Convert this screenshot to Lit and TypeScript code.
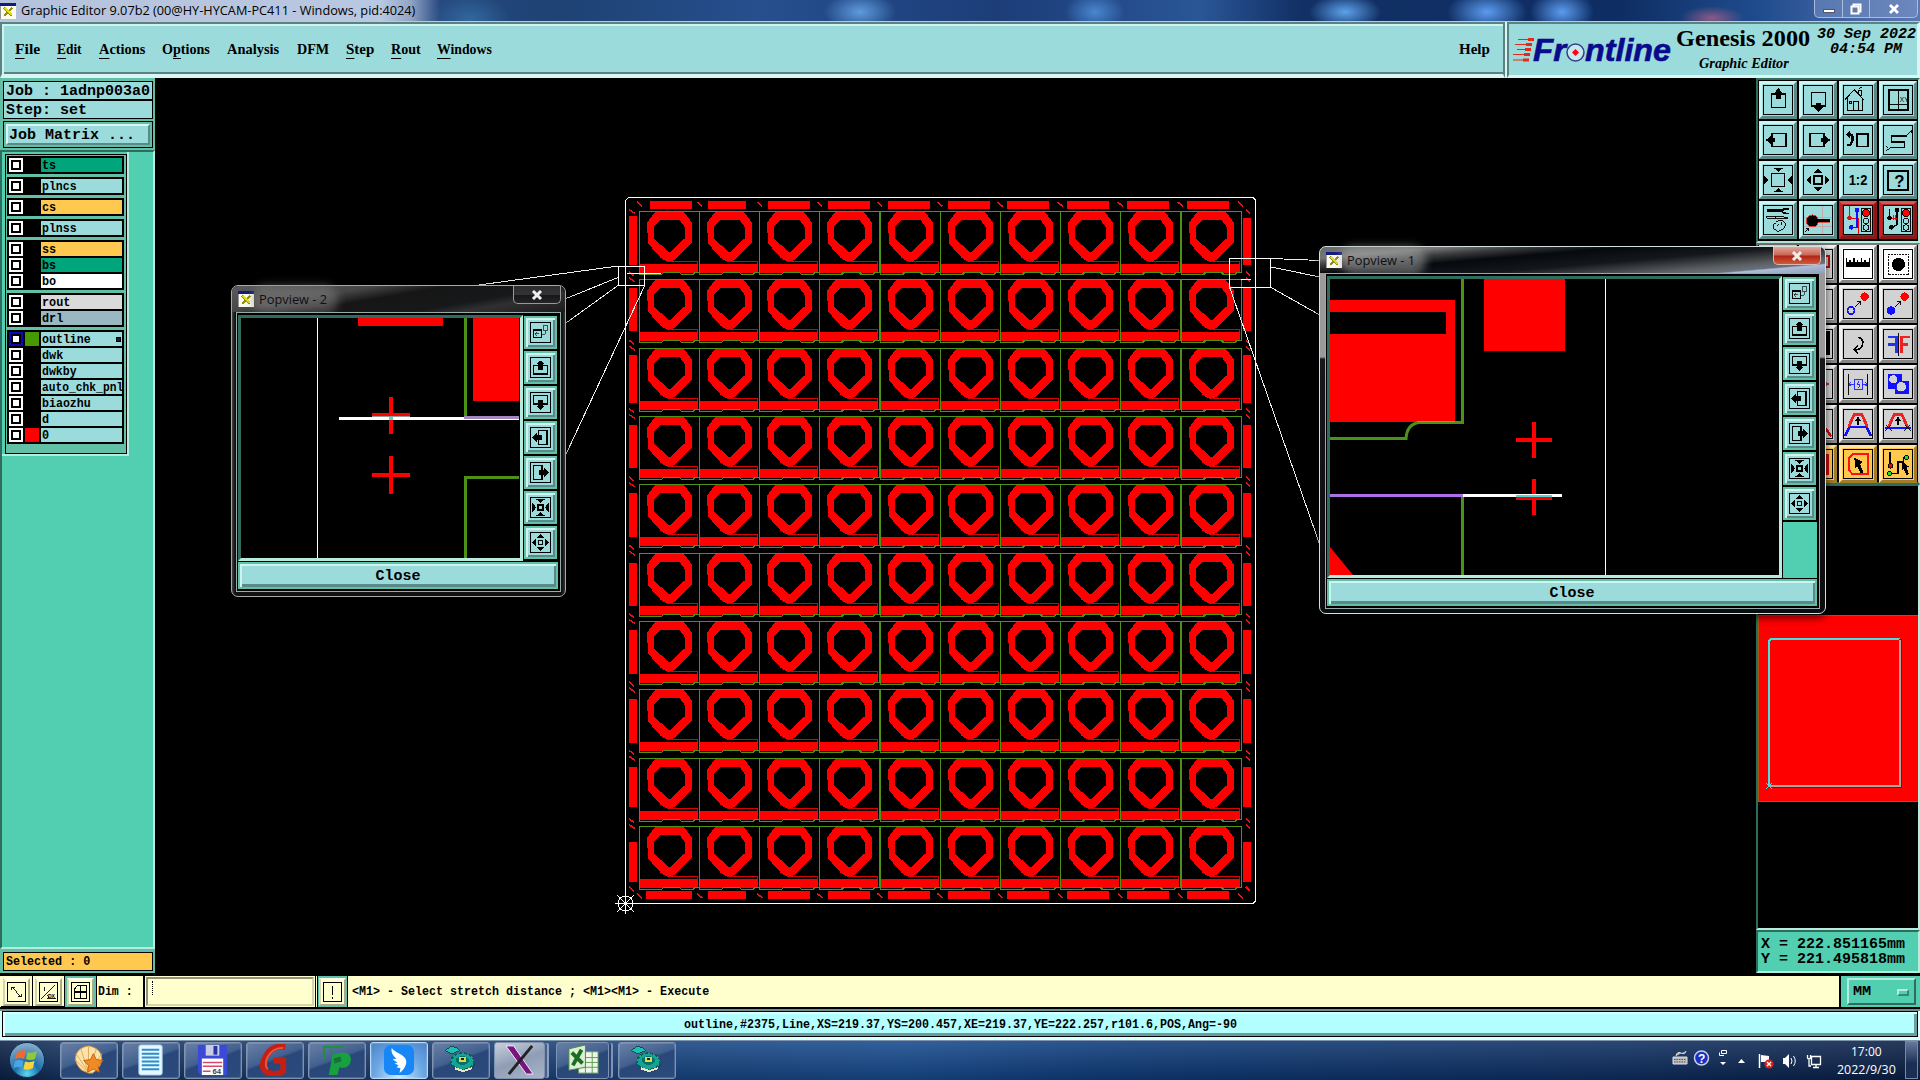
import { LitElement, html, svg, css } from "lit";
import { customElement, property } from "lit/decorators.js";

/* Text squeezed or stretched horizontally to an exact width. */
@customElement("fit-text")
class FitText extends LitElement {
  @property({ type: Number }) w = 0;
  static styles = css`
    :host { display: inline-block; white-space: pre; flex: none; }
    .box { display: block; overflow: visible; }
    .t { display: inline-block; transform-origin: 0 50%; }
  `;
  firstUpdated() {
    const t = this.renderRoot.querySelector(".t") as HTMLElement;
    const m = t.offsetWidth;
    if (m && this.w) t.style.transform = `scaleX(${this.w / m})`;
  }
  render() {
    return html`<span class="box" style="width:${this.w}px"><span class="t"><slot></slot></span></span>`;
  }
}

const K = "#000";
const tri = (p: string, c = K) => svg`<polygon points=${p} fill=${c} />`;
const box = (x: number, y: number, w: number, h: number, s = 2, c = K, f = "none") =>
  svg`<rect x=${x} y=${y} width=${w} height=${h} fill=${f} stroke=${c} stroke-width=${s} />`;
const ln = (d: string, s = 1, c = K) => svg`<path d=${d} fill="none" stroke=${c} stroke-width=${s} />`;
const dot = (x: number, y: number, r: number, c = K, st = "none") =>
  svg`<circle cx=${x} cy=${y} r=${r} fill=${c} stroke=${st} />`;

const icons: Record<string, unknown> = {
  up: svg`${box(8, 9, 15, 14)}${tri("15.5,2 20,8 18,8 18,14 13,14 13,8 11,8")}`,
  down: svg`${box(8, 7, 15, 14)}${tri("13,18 18,18 18,23 20,23 15.5,28 11,23 13,23")}`,
  left: svg`${box(9, 8, 15, 14)}${tri("2,15 8,10 8,12.5 12,12.5 12,17.5 8,17.5 8,20")}`,
  right: svg`${box(6, 8, 15, 14)}${tri("28,15 22,10 22,12.5 18,12.5 18,17.5 22,17.5 22,20")}`,
  home: svg`${ln("M1,14.500L11,4L21,14.500M3.500,12.500V26.500H19.500V12.500M10.500,26.500V16.500H15.500V26.500M5.500,16.500h2.500v2.500h-2.500ZM15.500,8V4.500H18.500V11M16,3l3,-2", 1.2)}`,
  win: svg`${box(5, 4, 21, 22)}${ln("M15.500,4V26M5,19.500H26")}<text x="17" y="17" font-size="7" font-family="Liberation Sans">XY</text>`,
  undo: svg`${ln("M4,9H7Q10,10 9,16L7,20H3", 2.5)}${tri("2,9 6,5 6,13")}${box(14, 9, 12, 13)}`,
  snake: svg`${ln("M25,11H8V17H22V23H7", 2)}${ln("M24,10l5,-5M29,4v3M7,23l-5,4M2,21l3,3")}`,
  zin: svg`${box(8, 8, 14, 14)}${tri("10,2 21,2 15.500,6")}${tri("10,28 21,28 15.500,24")}${tri("0,10 5,15 0,20")}${tri("30,10 25,15 30,20")}`,
  zout: svg`${box(11, 11, 8, 8)}${tri("10,8 15,3 20,8")}${tri("10,22 15,27 20,22")}${tri("8,10 3,15 8,20")}${tri("22,10 27,15 22,20")}`,
  ratio: svg`<text x="5" y="20" font-size="15" font-weight="bold" font-family="Liberation Sans" textLength="20" lengthAdjust="spacingAndGlyphs">1:2</text>`,
  help: svg`${box(4, 5, 22, 21)}<text x="11" y="22" font-size="18" font-family="Liberation Sans" font-weight="bold">?</text>`,
  tools: svg`${ln("M3,5H19", 3)}${ln("M27,3H22Q19,4 20,7L23,8H27", 2)}${ln("M3,11H12V13H3ZM12,11.500H20L26,13H12")}${ln("M15,16Q10,17 10,23Q12,29 18,26Q24,23 23,18Q20,14 15,16M14,21l2,-2M19,17v3")}`,
  ball: svg`${ln("M19.500,0V30M0,12.500H30M0,21.500H30", 1, "#c9a9a9")}${ln("M9,16H28", 5, "#d54")}${dot(9, 16, 6.500, "#000", "#e33")}${ln("M9,15.500H28", 3)}${ln("M1,28L5,24M2,24H5V27")}`,
  lights: svg`${ln("M6,0V12M6,13H16V30", 1.2, "#f00")}${ln("M14,5V20M8,23H14V8", 1.5, "#11f")}${dot(6, 13, 2.500, "#d11")}${dot(14, 4, 2.500, "#11f")}${dot(8, 23, 2.500, "#11f")}${box(18.500, 2.500, 10, 25, 1)}${dot(23.500, 7.500, 4, "#f00", K)}${dot(23.500, 16, 3, "none", K)}${dot(23.500, 23, 3, "none", K)}`,
  lights2: svg`${ln("M6,3V13M14,4V20L8,23", 1.500)}${ln("M7,13H14M10,10V15M12.500,10V15", 1, "#f00")}${dot(6, 13, 2.500)}${dot(14, 4, 2.500)}${dot(8, 23, 2.500)}${box(18.500, 2.500, 10, 25, 1)}${dot(23.500, 7.500, 4, "#f00", K)}${dot(23.500, 16, 3, "none", K)}${dot(23.500, 23, 3, "none", K)}`,
  ruler: svg`${ln("M2,15.500H28", 5)}${ln("M2.500,9V14M6.500,11V14M10.500,9V14M14.500,11V14M18.500,9V14M22.500,11V14M27.500,9V14", 1.500)}`,
  dashdot: svg`<rect x="4.500" y="4.500" width="22" height="22" fill="none" stroke="#000" stroke-dasharray="2 1" />${dot(15.500, 15.500, 7)}`,
  mv1: svg`${dot(22, 7, 4.500, "#f00")}<circle cx="7.500" cy="22" r="3.800" fill="none" stroke="#11f" stroke-width="2" />${ln("M12,18L18,12M14,12.500H18V16")}`,
  mv2: svg`${dot(22, 7, 4.500, "#f00")}${dot(7.500, 22, 4.500, "#11f")}${ln("M12,18L18,12M14,12.500H18V16")}`,
  rot: svg`${ln("M15,8Q21,9 20,15Q18,22 12,21", 1.8)}${ln("M15,17L11,21L15,25", 1.5)}`,
  mirror: svg`${ln("M4,7.500H13V25M4,15.500H13", 3, "#2233ee")}${ln("M28,7.500H19V25M26,15.500H19", 3, "#e22")}${ln("M15.500,3V28")}`,
  stretch: svg`${ln("M4.500,4V27M25.500,4V27")}${ln("M5,15.500H11M19,15.500H25M8,13L5,15.500L8,18M22,13L25,15.500L22,18", 1, "#22f")}${box(11.500, 10.500, 8, 10, 1, "#22f")}${ln("M16,12L14,16H17L16,19", 1, "#22f")}`,
  shapes: svg`<rect x="4" y="4" width="15" height="16" fill="#11f" /><rect x="12" y="12" width="15" height="14" fill="#11f" />${dot(10, 10, 4.500, "#d2d2d2")}${dot(18.500, 18, 5.500, "#d2d2d2", "#11f")}`,
  trap: svg`${ln("M1,28L6,18H24L29,28", 2.500, "#11f")}${ln("M5,18L11,4.500H19L25,18", 3, "#e22")}${ln("M15,16V9M12,12L15,8.500L18,12", 1.5)}`,
  trap2: svg`${ln("M1,19H29", 2.500, "#11f")}${ln("M5,18L11,4.500H19L25,18", 3, "#e22")}${ln("M15,16V9M12,12L15,8.500L18,12", 1.500)}${ln("M2,22L8,16M2,16L8,22M22,22L28,16M22,16L28,22")}`,
  sel: svg`<path d="M10,4H26V26H9L5,21V9Z" fill="none" stroke="#f11" stroke-width="2" />${tri("11,8 20,13 17,15 21,24 18,25 14,17 12,20")}`,
  sel2: svg`${ln("M6.500,2V18", 1.5)}${ln("M8,25H15V13H21V8H24", 1.500)}${dot(7, 17, 2.500, "#c11", K)}${dot(6, 25, 2.500, "#2d2", K)}${dot(24, 8, 2.500, "#2d2", K)}${tri("19,12 27,18 24,19 27,26 24,27 21,20 19,22")}`,
  frag1: svg`${box(13, 6, 14, 12, 2, "#b11")}`,
  frag2: svg``,
  frag3: svg`<rect x="4" y="1" width="24" height="26" fill="#000" />`,
  frag4: svg`${tri("21,11 28,15 21,19", "#a44")}`,
  frag5: svg`${ln("M22,18L29,28", 2.500, "#c11")}`,
  frag6: svg`<rect x="6" y="4" width="21" height="23" fill="#c11" />`,
  pback: svg`${box(4, 11, 12, 12, 2)}${box(19.500, 3.500, 7, 9, 1)}${ln("M16,17.500H22.500V12M7,17H13M9,14L6.500,17L9,20")}`,
  pup: svg`${box(4, 12, 22, 13, 2.5)}${tri("15,4 22,10 19,10 19,19 11,19 11,10 8,10")}`,
  pdown: svg`${box(4, 4, 22, 13, 2.5)}${tri("11,11 19,11 19,20 22,20 15,27 8,20 11,20")}`,
  pleft: svg`${box(12, 4, 13, 22, 2.5)}${tri("2,15 9,8 9,11 17,11 17,19 9,19 9,22")}`,
  pright: svg`${box(4, 4, 13, 22, 2.5)}${tri("28,15 21,8 21,11 13,11 13,19 21,19 21,22")}`,
  pin: svg`${box(11.500, 11.500, 7, 7, 2.5)}${tri("7,1 23,1 15,8")}${tri("7,29 23,29 15,22")}${tri("1,6 8,15 1,24")}${tri("29,6 22,15 29,24")}`,
  pout: svg`${box(11.500, 11.500, 7, 7, 1.5)}${tri("9,8 15,2 21,8")}${tri("9,22 15,28 21,22")}${tri("8,9 2,15 8,21")}${tri("22,9 28,15 22,21")}`,
  diag: svg`${ln("M7,7L23,23M7,12V7H12M18,23H23V18", 1.5)}`,
  angle: svg`${ln("M2,26L26,4M8,6V13M13,20Q15,22 14,26M14,26H28", 1.500)}<text x="14" y="25" font-size="9" font-family="Liberation Sans">DX</text>`,
  grid: svg`${ln("M5,9L10,4H25V26H5ZM15,4V26M5,15H25", 2)}`,
  bang: svg`${ln("M15,5V20M15,23V26", 2)}`,
};

@customElement("tool-button")
class ToolButton extends LitElement {
  @property() icon = "";
  @property({ reflect: true }) tone = "teal";
  @property({ reflect: true }) size = "big";
  static styles = css`
    :host { display: block; box-sizing: border-box; }
    .b { box-sizing: border-box; width: 38px; height: 38px; border: 3px solid; padding: 1px;
      border-color: #cdf4f1 #598989 #598989 #cdf4f1; background: #9cdbdb; }
    svg { box-sizing: border-box; display: block; width: 30px; height: 30px; border: 1px solid #000; shape-rendering: crispEdges; overflow: hidden; }
    :host([tone="gray"]) .b { background: #d2d2d2; border-color: #f0f0f0 #858585 #858585 #f0f0f0; }
    :host([tone="white"]) .b { background: #fff; border-color: #f0f0f0 #858585 #858585 #f0f0f0; }
    :host([tone="red"]) .b { border-color: #d05a5a #8d1616 #8d1616 #c32525; box-shadow: inset 0 0 0 2px #b51d1d; }
    :host([tone="gold"]) .b { background: #ffc84f; border-color: #ffe4a5 #a47d24 #a47d24 #ffe4a5; }
    :host([size="pop"]) .b { width: 33px; height: 33px; border: 2px solid #62c0a7;
      box-shadow: inset 2px 2px #cdf4f1, inset -2px -2px #598989; padding: 4px; }
    :host([size="pop"]) svg { width: 21px; height: 21px; }
    :host([size="cmd"]) .b { width: 27px; height: 28px; background: #ffffce; padding: 2px 3px;
      border: 2px solid; border-color: #fffff0 #aaa98a #aaa98a #d5d4b0; }
    :host([size="cmd"]) svg { width: 19px; height: 20px; margin-left: -1px; }
  `;
  render() {
    return html`<div class="b"><svg viewBox="0 0 30 30" preserveAspectRatio="none">${icons[this.icon]}</svg></div>`;
  }
}

const xIcon = html`<svg width="16" height="16" viewBox="0 0 16 16" shape-rendering="crispEdges">
  <rect width="16" height="16" fill="#fbfbf0" stroke="#999" /><rect width="16" height="3" fill="#111a80" />
  <path d="M4,5L12,13M12,5L4,13" stroke="#8f8f14" stroke-width="2" /><path d="M5,5L12,12" stroke="#e4da20" stroke-width="1.500" />
</svg>`;

@customElement("pop-view")
class PopView extends LitElement {
  @property() label = "";
  @property({ type: Boolean, reflect: true }) active = false;
  static styles = css`
    :host { display: flex; flex-direction: column; box-sizing: border-box; border: 1px solid #a9a9a9; border-radius: 7px;
      background: linear-gradient(90deg, #444 0, #111 3px, #111 calc(100% - 3px), #333 100%);
      padding: 0 4px 4px; box-shadow: 0 3px 9px rgba(0,0,0,.7); }
    :host([active]) { padding: 0 5px 4px; border-color: #d5dfdf;
      background: linear-gradient(180deg, #9a9a9a 0, #999 110px, #16181c 112px, #0a0c10 100%); }
    .bar { height: 26px; margin: 0 -4px; padding: 0 0 0 6px; display: flex; align-items: center; border-radius: 6px 6px 0 0;
      background: linear-gradient(170deg, #5b5b5b 0, #464646 30%, #161616 45%, #17181a 68%, #303030 78%, #1c1c1e 100%); }
    :host([active]) .bar { margin: 0 -5px;
      background: linear-gradient(175deg, #6b6b6b 0, #777 16%, #3a3b3d 26%, #06090d 38%, #14171b 58%, #5c5f62 78%, #69717c 86%, #aebdd8 88%, #8ea0bd 100%); }
    .title { font: 13px "Open Sans", "Noto Sans", sans-serif; color: #101010; margin-left: 5px; padding: 0 4px 0 0; line-height: 15px;
      background: rgba(170,170,170,.5); box-shadow: 0 0 9px 7px rgba(170,170,170,.5); border-radius: 8px; }
    :host(:not([active])) .title { background: rgba(130,130,130,.5); box-shadow: 0 0 9px 7px rgba(130,130,130,.5); }
    .x { margin: 0 4px 0 auto; align-self: flex-start; width: 46px; height: 17px; border: 1px solid #999; border-top: 0; border-radius: 0 0 5px 5px;
      background: linear-gradient(#2c2c30 0, #333 50%, #16171a 52%, #242424); display: flex; align-items: center; justify-content: center; }
    :host([active]) .x { background: linear-gradient(#e0a79c 0, #cc6453 48%, #b02312 52%, #d05a3d); border-color: #d8b7b0; }
    .frame { flex: 1; min-height: 0; border: 1px solid #9aa; background: #000; display: flex; flex-direction: column; padding: 2px 2px 2px 1px; box-sizing: border-box; gap: 1px; }
    .main { flex: 1; display: flex; gap: 1px; min-height: 0; }
    .view { flex: 1; border: 3px solid; border-color: #2f6c5e #b5ecdd #b5ecdd #2f6c5e; overflow: hidden; }
    .side { width: 34px; display: flex; flex-direction: column; gap: 2px; padding-top: 1px; }
    .fill { flex: 1; background: #52cfb0; }
    .close { height: 27px; box-sizing: border-box; border: 2px solid #62c0a7; background: #9cdbdb; display: flex; align-items: center; justify-content: center; padding-top: 2px;
      box-shadow: inset 2px 2px #cdf4f1, inset -2px -3px #598989; font: bold 15px "Liberation Mono", monospace; color: #000; }
  `;
  render() {
    const list = ["pback", "pup", "pdown", "pleft", "pright", "pin", "pout"];
    return html`<div class="bar">${xIcon}<span class="title"><fit-text w="68">${this.label}</fit-text></span>
      <div class="x"><svg width="12" height="10" viewBox="0 0 12 10"><path d="M2,1L10,9M10,1L2,9" stroke="#eee" stroke-width="3" /></svg></div></div>
      <div class="frame"><div class="main"><div class="view"><slot></slot></div>
      <div class="side">${list.map((i) => html`<tool-button size="pop" icon=${i}></tool-button>`)}<div class="fill"></div></div></div>
      <div class="close">Close</div></div>`;
  }
}

const PX = 60.2, PY = 68.35, X0 = 639.5, Y0 = 211.5;
const R = "#f00", G = "#4c9217";

const cell = (c: number, r: number) => {
  const x = Math.round(X0 + c * PX - 0.8) + 0.5, y = Math.round(Y0 + r * PY - 0.5) + 0.5;
  return svg`<g transform="translate(${x} ${y})">
    <path fill=${R} fill-rule="evenodd" d="M16,0H44L52.500,11V31L38,46L33,49.500H26L21,46L8.500,32L7.500,11ZM21,8.500L14.500,15.500V27L29,40.500H31L45,27V15L40,8.500Z" />
    <rect x="0.500" y="52.500" width="57.500" height="8.500" fill=${R} />
    <path d="M27,49.500H58V52" fill="none" stroke="#d00" />
    <path d="M0,0H60V61H55L54,63H42L40,61H24L22,63H0Z" fill="none" stroke=${G} stroke-width=${c > 2 ? 1.5 : 1} />
  </g>`;
};

const range = (n: number) => Array.from({ length: n }, (_, i) => i);
const sideBars: [number, number][] = [[216, 265], [288, 331], [355, 403], [425, 468], [493, 537], [563, 606], [630, 674], [699, 743], [767, 807], [842, 882]];
const edgeBar = (i: number) => (i === 1 ? 38 : 42);

const board = () => svg`
  ${range(10).map((r) => range(10).map((c) => cell(c, r)))}
  ${range(10).map((i) => {
    const x = Math.round(650 + i * 59.9 - (i === 1 ? 2 : 0) - (i > 1 ? 2 : 0));
    return svg`<rect x=${x} y="201" width=${edgeBar(i)} height="8" fill=${R} />
      <rect x=${i ? x : x - 4} y="891" width=${i ? edgeBar(i) : 46} height="8" fill=${R} />`;
  })}
  ${range(11).map((i) => ln(`M${637 + i * 60.1},202l5,4.500M${637 + i * 60.1},893.500l5,4.500`, 1.5, "#e11"))}
  ${sideBars.map(([a, b], i) => svg`<rect x="629" y=${a} width="8" height=${b - a} fill=${R} /><rect x="1243" y=${i ? a : a + 2} width="8" height=${b - a - (i ? 0 : 2)} fill=${R} />`)}
  ${range(11).map((i) => {
    const y = 204.500 + i * PY;
    return ln(`${i ? `M629,${y - 1}l5,4` : ""}${i < 10 ? `M629,${y + 5}l6,4` : ""}${i ? `M1246,${y - 1}l4,4` : ""}${i < 10 ? `M1246,${y + 5}l4,4` : ""}`, 1.5, "#e11");
  })}
  <path d="M628.500,197.500H1253L1255.500,200V901L1253,903.500H625.500V200.500Z" fill="none" stroke="#fff" />
  <path d="M627,273.500H661M1241,279.500H1251" stroke="#fff" /><path d="M1182,279.500H1241" stroke="#a35ae0" />
  <path d="M618.500,266.500H644.500V285.500H618.500ZM1229.500,258.500H1270.500V287.500H1229.500Z" fill="none" stroke="#fff" />
  <path d="M618,266L241,317.500M618,277.500L518,318M618,285.500L241,557M644.500,286L518,557M1271,258.500L1779,279M1271,267L1330,279M1271,287.500L1779,574M1229.500,287L1330,574" stroke="#eee" />
  <g stroke="#fff" fill="none"><circle cx="625.500" cy="903.500" r="7.500" /><path d="M615,903.500H636M625.500,893V914M617,895L634,912M634,895L617,912" /></g>`;

type Row = [string, string, string?];
const layers: Row[][] = [
  [["ts", "#00a57b"]], [["plncs", "#9cdbdb"]], [["cs", "#ffc84f"]], [["plnss", "#9cdbdb"]],
  [["ss", "#ffc84f"], ["bs", "#00a57b"], ["bo", "#fff"]],
  [["rout", "#dadada"], ["drl", "#9ab8c2"]],
  [["outline", "#9cdbdb", "#449a00"], ["dwk", "#9cdbdb"], ["dwkby", "#9cdbdb"], ["auto_chk_pnl", "#9cdbdb"], ["biaozhu", "#9cdbdb"], ["d", "#9cdbdb"], ["0", "#9cdbdb", "#f00"]],
];

const menus: [string, string, string, number, number][] = [
  ["", "F", "ile", 25, 17], ["", "E", "dit", 25, 17], ["", "A", "ctions", 46, 17], ["O", "p", "tions", 48, 17],
  ["Anal", "", "ysis", 52, 18], ["DFM", "", "", 32, 17], ["", "S", "tep", 28, 17], ["", "R", "out", 30, 16], ["", "W", "indows", 55, 0],
];

const tools1 = ["up", "down", "home", "win", "left", "right", "undo", "snake", "zin", "zout", "ratio", "help", "tools", "ball", "lights", "lights2"];
const tools2: [string, string][] = [
  ["frag2", "gray"], ["frag1", "gray"], ["ruler", "white"], ["dashdot", "white"],
  ["frag2", "gray"], ["frag2", "gray"], ["mv1", "gray"], ["mv2", "gray"],
  ["frag2", "gray"], ["frag3", "gray"], ["rot", "gray"], ["mirror", "gray"],
  ["frag2", "gray"], ["frag4", "gray"], ["stretch", "gray"], ["shapes", "gray"],
  ["frag2", "gray"], ["frag5", "gray"], ["trap", "gray"], ["trap2", "gray"],
  ["frag6", "gold"], ["frag6", "gold"], ["sel", "gold"], ["sel2", "gold"],
];

const disc = svg`<g shape-rendering="crispEdges"><ellipse cx="19" cy="20" rx="12" ry="9" fill="#3b3560" /><ellipse cx="18" cy="18" rx="12" ry="8.500" fill="#12a596" stroke="#0b5e58" stroke-dasharray="3 2" stroke-width="2" />
  <ellipse cx="18" cy="17" rx="7" ry="4.500" fill="#0b6f66" /><ellipse cx="18" cy="16" rx="4" ry="3" fill="#d9d94a" /><ellipse cx="18" cy="15.500" rx="2" ry="1.500" fill="#124" />
  <path d="M0,7L7,2L12,4L15,7L7,10Z" fill="#1fc0b4" stroke="#0a4a48" /><path d="M10,25l9,3l9,-3" stroke="#e6e6c8" fill="none" stroke-width="2" /></g>`;
const apps: [unknown, string, number, number][] = [
  [svg`<path d="M16,30L9,27C-2,17 2,4 16,2C30,4 34,17 24,27L20,30Z" fill="#fbe3ae" stroke="#d79a3c" /><path d="M16,29V3M16,29L8,5M16,29L3,10M16,29L24,5M16,29L30,10M14,28L2,16" stroke="#e6a84c" fill="none" /><path d="M21,10l3,6l7,1l-5,5l1,7l-6,-3l-6,3l1,-7l-5,-5l7,-1Z" fill="#f08a24" stroke="#c5601a" />`, "", 58, 4],
  [svg`<rect x="4" y="1" width="24" height="31" rx="2" fill="#e9f7ff" stroke="#9fd0ee" /><path d="M7,6H25M7,10H25M7,14H25M7,18H25M7,22H25M7,26H25" stroke="#2b8fc9" stroke-width="2" />`, "", 58, 4],
  [svg`<path d="M1,1H31V32H4L1,29Z" fill="#3b49d8" /><rect x="9" y="1" width="14" height="11" fill="#c9cde4" /><rect x="17" y="2" width="4" height="9" fill="#2732a8" /><rect x="5" y="15" width="22" height="17" fill="#fff" /><path d="M6,19H26M6,23H26M6,28H14" stroke="#d6486c" stroke-width="1.500" /><text x="16" y="31" font-size="8" font-weight="bold" font-family="Liberation Sans" fill="#444">64</text>`, "", 58, 4],
  [svg`<path d="M27,3Q14,1 8,11Q0,24 8,29Q17,33 25,28V17H15" fill="none" stroke="#c51f14" stroke-width="6" /><path d="M25,4Q14,4 9,13Q5,22 9,26" fill="none" stroke="#f0563c" stroke-width="2" />`, "", 58, 4],
  [svg`<path d="M3,16V3H24M11,10V5" fill="none" stroke="#1f9040" stroke-width="2" /><path d="M12,11Q29,5 31,15Q30,27 19,24L17,32H8Z" fill="#17a03f" /><path d="M13,15L20,13L21,18L14,20Z" fill="#187034" />`, "", 58, 4],
  [svg`<rect x="1" y="1" width="31" height="31" rx="7" fill="#1787f7" /><path d="M9,4C12,9 24,11 24,18C24,22 22,26 17,30L18,25L14,24L16,22L12,20L15,19L10,16L14,15C10,12 8,8 9,4Z" fill="#fff" />`, "hot", 58, 4],
  [disc, "", 58, 4],
  [svg`<path d="M2,2H10L30,31H23Z" fill="#7a1482" stroke="#eee" /><path d="M29,2L5,31" stroke="#222" stroke-width="3" />`, "pale", 51, 11],
  [svg`<rect x="12" y="8" width="20" height="22" fill="#eef6ea" stroke="#6d9b66" /><path d="M12,14H32M12,19H32M12,24H32M19,8V30M26,8V30" stroke="#5c9e52" /><path d="M2,5L19,1V24L2,27Z" fill="#dcefd5" stroke="#4d8c3e" /><path d="M5,9L16,20M15,6L6,22" stroke="#1b6d20" stroke-width="4" />`, "multi", 53, 9],
  [disc, "", 58, 0],
];

@customElement("app-root")
class AppRoot extends LitElement {
  static styles = css`
    :host { display: flex; flex-direction: column; position: relative; width: 1920px; height: 1080px; overflow: hidden; background: #000; color: #000;
      font-family: "Liberation Sans", sans-serif; }
    * { box-sizing: border-box; }
    .mono7 { font: bold 13.500px/14px "Liberation Mono", monospace; }
    .mono9 { font: bold 15px/16px "Liberation Mono", monospace; }
    .titlebar { height: 22px; flex: none; display: flex; align-items: center; font: 13.500px "Open Sans", "Noto Sans", sans-serif; border-bottom: 1px solid #b5cbe3;
      background: radial-gradient(ellipse 40px 26px at 470px 20px, #31689e, transparent), radial-gradient(ellipse 30px 20px at 1095px 12px, #4a86d0, transparent), radial-gradient(ellipse 36px 20px at 860px 12px, #5f9bdc, transparent), radial-gradient(ellipse 36px 18px at 1345px 12px, #5da2ec, transparent), radial-gradient(ellipse 40px 22px at 1487px 12px, #5b9cf0, transparent), radial-gradient(ellipse 32px 22px at 1562px 12px, #5b9cf0, transparent), radial-gradient(ellipse 32px 12px at 1712px 18px, #8a5a86, transparent),
      linear-gradient(90deg, #b5c2dc 0, #b9c8e2 380px, #93a6c8 410px, #26497f 440px, #1e4273 560px, #264f8e 760px, #1c3d78 1000px, #2a5697 1200px, #123064 1300px, #0e2d63 1620px, #1f4c8e 1760px, #4768a5 1860px, #5a78b2 100%); }
    .titlebar .cap { margin: -2px 0 0 5px; }
    .titlebar svg { flex: none; }
    .ctl { margin: 0 2px 3px auto; align-self: flex-start; display: flex; height: 18px; border: 1px solid #a9bcdd; border-top: 0; border-radius: 0 0 5px 5px; background: rgba(130,155,205,.45); }
    .ctl span { display: flex; align-items: center; justify-content: center; border-right: 1px solid #a9bcdd; }
    .ctl span:last-child { border: 0; }
    .c1 { width: 28px; } .c2 { width: 27px; } .c3 { width: 47px; }
    .head { height: 56px; flex: none; display: flex; background: #d8f6f4; }
    .menu { width: 1505px; border: 2px solid #5b8181; border-width: 2px 2px 4px 2px; border-bottom-color: #d8f6f4; background: #9cdbdb; display: flex; align-items: center; padding: 0 13px 0 11px;
      box-shadow: inset 2px 2px #cff3f1, inset 0 -2px #5b8181; font: bold 15px "Liberation Serif", serif; }
    u { text-underline-offset: 4px; text-decoration-thickness: 1px; }
    .help { margin-left: auto; }
    .brand { flex: 1; margin-left: 2px; border: 2px solid; border-width: 2px 3px 3px 2px; border-color: #5b8181 #d8f6f4 #d8f6f4 #5b8181; background: #9cdbdb; display: flex; padding-left: 3px; }
    .logo { flex: none; margin-top: 8px; }
    .names { width: 138px; margin-left: 4px; display: flex; flex-direction: column; align-items: flex-start; }
    .gen { font: bold 23px/29px "Liberation Serif", serif; }
    .ge { font: italic bold 15px/20px "Liberation Serif", serif; margin: -1px 0 0 23px; padding-top: 1px; }
    .date { font: italic bold 15px/15px "Liberation Mono", monospace; display: flex; flex-direction: column; padding: 3px 0 0 3px; }
    .date .t2 { margin-left: 13px; }
    .mid { height: 897px; flex: none; display: flex; }
    .left { width: 155px; flex: none; display: flex; flex-direction: column; background: #62bfa6; border-bottom: 2px solid #000; }
    .jobs { padding: 3px 2px 2px 3px; display: flex; flex-direction: column; }
    .jl { border: 1px solid #000; background: #9cdbdb; height: 19px; padding-left: 2px; line-height: 19px; }
    .jm { margin-top: 2px; border: 1px solid #000; height: 27px; padding: 2px; }
    .jmb { background: #9cdbdb; border: 2px solid; border-color: #d8f6f4 #598989 #598989 #d8f6f4; height: 21px; padding-left: 1px; line-height: 19px; }
    .lay { flex: 1; background: #52cfb0; border: 2px solid; border-color: #2f6c5e #b5ecdd #b5ecdd #2f6c5e; display: flex; align-items: flex-start; min-height: 0; }
    .stack { width: 127px; height: 304px; background: #52cfb0; border-right: 2px solid #b5ecdd; border-bottom: 2px solid #b5ecdd; padding: 2px 0 0 3px; }
    .frame { width: 122px; height: 300px; border: 1px solid #000; background: #62c0a7; padding: 1px; display: flex; flex-direction: column; gap: 3px; }
    .grp { background: #000; width: 117px; padding: 2px; display: flex; flex-direction: column; gap: 2px; }
    .row { display: flex; gap: 2px; height: 14px; }
    .chk { width: 14px; height: 14px; background: #fff; padding: 2px; }
    .chk i { display: block; width: 10px; height: 10px; border: 2px solid #000; }
    .chk.on { background: #0a0ab0; }
    .chk.on i { background: #fff; }
    .sw { width: 14px; height: 14px; }
    .nm { width: 81px; height: 14px; overflow: hidden; padding: 1px 0 0 1px; display: flex; align-items: center; white-space: pre; }
    .mk { width: 5px; height: 5px; border: 1px solid #000; background: #123; margin-left: 25px; }
    .selb { height: 24px; padding: 3px 2px 2px 3px; }
    .sel { height: 19px; border: 1px solid #000; background: #ffc84f; padding: 2px; }
    .canvas { flex: 1; min-width: 0; background: #000; }
    .canvas svg { display: block; }
    .right { width: 164px; flex: none; display: flex; flex-direction: column; }
    .tb { display: grid; grid-template-columns: repeat(4, 38px); grid-auto-rows: 38px; align-content: start; gap: 2px; background: #000; border: 2px solid; border-color: #2f6c5e #b5ecdd #b5ecdd #2f6c5e; padding: 1px; height: 165px; }
    .tb.two { height: 241px; border-color: #777 #ccc #2f6c5e #777; padding: 0 1px; }
    .map { flex: 1; border: 2px solid; border-color: #2f6c5e #b5ecdd #b5ecdd #2f6c5e; background: #000; min-height: 0; }
    .map svg { display: block; }
    .xy { height: 43px; border: 2px solid; border-color: #2f6c5e #b5ecdd #b5ecdd #2f6c5e; background: #52cfb0; display: flex; flex-direction: column; justify-content: center; padding: 0 0 0 3px; margin-bottom: 2px; }
    .xy div { height: 15px; line-height: 15px; white-space: pre; }
    .cmd { height: 34px; flex: none; display: flex; border-bottom: 2px solid #000; border-top: 1px solid #000; background: #ffffce; padding-left: 1px; align-items: stretch; }
    .cb { width: 31px; margin-right: 1px; border-bottom: 1px solid #000; box-shadow: 1px 0 #000; padding: 2px 1px 0 2px; }
    .cb.g { background: #62c0a7; border: 0; }
    .dim { width: 46px; padding: 9px 0 0 1px; }
    .inp { width: 173px; border: 1px solid #000; border-width: 0 1px 0 2px; padding: 1px; }
    .inp div { height: 29px; border: 2px solid; border-color: #918f7e #d5d4b0 #d5d4b0 #918f7e; padding: 2px 4px; }
    .inp i { display: block; width: 1px; height: 14px; border-left: 1px dotted #000; }
    .ex { width: 31px; margin-left: 1px; background: #62c0a7; padding: 2px 1px; border: 1px solid #000; border-width: 0 1px; }
    .msg { flex: 1; padding: 9px 0 0 4px; }
    .unit { width: 81px; border-left: 2px solid #000; background: #52cfb0; padding: 2px 4px 1px 6px; }
    .ub { height: 27px; border: 2px solid; border-color: #b5ecdd #2f6c5e #2f6c5e #b5ecdd; display: flex; align-items: center; padding: 1px 5px 0 4px; justify-content: space-between; }
    .ub i { width: 12px; height: 7px; border: 2px solid; border-color: #b5ecdd #2f8a78 #2f8a78 #b5ecdd; }
    .stat { height: 31px; flex: none; border-top: 2px solid #6f9090; background: #d9ffff; padding: 0 2px 3px; }
    .stat div { height: 26px; border: 1px solid #000; background: #b3ffff; box-shadow: inset 2px 2px #dcffff, inset -3px -3px #6a9d9d; display: flex; align-items: center; justify-content: center; padding-top: 1px; }
    .task { flex: 1; display: flex; align-items: center; padding: 0 2px 1px 8px; border-top: 1px solid #7f93ad;
      background: linear-gradient(180deg, rgba(255,255,255,.12), rgba(0,0,0,.18)), linear-gradient(90deg, #0a1f45 0, #14315e 60px, #1d3c6c 400px, #174582 680px, #164a8e 900px, #0e3c7c 1100px, #0c356f 1300px, #0d2e62 1600px, #0a1f45 100%); }
    .orb { flex: none; margin-right: 14px; }
    .app { height: 37px; border: 1px solid #7e92b2; border-radius: 3px; background: linear-gradient(160deg, #6980a6 0, #42608f 45%, #294879 50%, #2c4b7d 100%); display: flex; align-items: center; justify-content: center; flex: none; box-shadow: inset 0 0 0 1px rgba(255,255,255,.15); }
    .app svg { width: 32px; height: 32px; }
    .app.hot { background: radial-gradient(circle at 50% 100%, #c9eaff, #6ba7e4 55%, #4c82c7); border-color: #b6daf7; }
    .app.pale { background: linear-gradient(160deg, #c9d0de, #8f9db5 50%, #a9b5c8); box-shadow: 3px 0 0 -1px #4a608b, 5px 0 0 -1px #8ea0bf; }
    .app.multi { box-shadow: 3px 0 0 -1px #2a4272, 5px 0 0 -1px #8093b5; }
    .tray { margin-left: auto; display: flex; align-items: center; }
    .clock { width: 77px; color: #fff; font: 12px/18px "Open Sans", "Noto Sans", sans-serif; display: flex; flex-direction: column; align-items: center; padding-top: 1px; }
    .show { width: 13px; height: 38px; border: 1px solid #7589a8; background: linear-gradient(#64799b, #1b2f54 60%); }
    .pv { position: absolute; z-index: 2; }
    .p1 { left: 1319px; top: 246px; width: 507px; height: 368px; }
    .p2 { left: 231px; top: 285px; width: 335px; height: 312px; }
    .pv svg { display: block; }
  `;

  view2() {
    return html`<svg width="278" height="240" viewBox="241 318 278 240" shape-rendering="crispEdges">
      <rect x="317" y="318" width="1" height="240" fill="#fff" />
      <path fill="#f00" d="M358,318H443V326H358ZM473,318H519V401H473ZM372,473H410V477H372ZM389,456H393V494H389ZM372,413H410V417H372ZM389,397H393V434H389Z" />
      <path d="M464,318H467V417H464ZM464,476H519V479H467V558H464Z" fill="#4c9217" />
      <path d="M339,417H519V420H339Z" fill="#fff" /><path d="M464,416H519V418.500H464Z" fill="#a488bd" /><path d="M372,416H410V417H372Z" fill="#999" /><path d="M389,417H393V420H389Z" fill="#4cd6dc" />
    </svg>`;
  }
  view1() {
    return html`<svg width="450" height="296" viewBox="1330 279 450 296">
      <path fill="#f00" d="M1330,300H1455V422H1330ZM1484,279H1565V351H1484ZM1330,547L1353,575H1330ZM1516,438H1552V442H1516ZM1532,422H1536V458H1532ZM1516,496H1552V500H1516ZM1532,479H1536V515H1532Z" />
      <rect x="1330" y="312" width="116" height="22" fill="#000" />
      <path d="M1462.500,279V422.500H1419Q1407,424 1406,438.500H1330M1462.500,496V575" fill="none" stroke="#4c9217" stroke-width="3" />
      <path d="M1417,421.500H1455" stroke="#d97f10" stroke-width="1" />
      <rect x="1330" y="494" width="133" height="3" fill="#b06ee6" /><rect x="1463" y="494" width="99" height="3" fill="#fff" /><rect x="1516" y="495" width="36" height="2" fill="#58d6d6" />
      <rect x="1605" y="279" width="1" height="296" fill="#fff" />
    </svg>`;
  }

  render() {
    return html`
      <div class="titlebar">${xIcon}<fit-text class="cap" w="394">Graphic Editor 9.07b2 (00@HY-HYCAM-PC411 - Windows, pid:4024)</fit-text>
        <div class="ctl"><span class="c1"><svg width="12" height="10"><rect x="0.500" y="5.500" width="11" height="3" fill="#fff" stroke="#556" /></svg></span>
          <span class="c2"><svg width="12" height="12"><path d="M3.500,3V1.500H10.500V8.500H9" fill="none" stroke="#fff" stroke-width="2" /><rect x="1.500" y="3.500" width="7" height="7" fill="#667aa8" stroke="#fff" stroke-width="2" /></svg></span>
          <span class="c3"><svg width="12" height="10"><path d="M2,1L10,9M10,1L2,9" stroke="#fff" stroke-width="2.800" /></svg></span></div></div>
      <div class="head">
        <div class="menu">
          <span style="width:2px"></span>
          ${menus.map(([a, b, c, w, g]) => html`<fit-text w=${w}>${a}<u>${b}</u>${c}</fit-text><span style="width:${g}px"></span>`)}
          <fit-text class="help" w="31">Help</fit-text>
        </div>
        <div class="brand">
          <svg class="logo" width="160" height="34" viewBox="1512 32 160 34">
            <path d="M1518,39.500H1534M1515,44.500H1532M1517,49.500H1531M1513,54.500H1530M1513,60H1529" stroke="#e9281c" stroke-width="1.200" />
            <path d="M1528,39.500H1534M1526,44.500H1532M1525,49.500H1531M1524,54.500H1530M1523,60H1529" stroke="#e9281c" stroke-width="3" />
            <g font-family="Liberation Sans" font-weight="bold" font-style="italic" font-size="31" fill="#0a0a8c" stroke="#0a0a8c" stroke-width=".6">
              <text x="1533" y="60.500" textLength="33" lengthAdjust="spacingAndGlyphs">Fr</text>
              <text x="1585" y="60.500" textLength="86" lengthAdjust="spacingAndGlyphs">ntline</text></g>
            <circle cx="1575.500" cy="52.500" r="8.500" fill="#c5e9ee" stroke="#33408a" stroke-width="1.500" /><path d="M1575.500,49L1579,52.500L1575.500,56L1572,52.500Z" fill="#f01" />
          </svg>
          <div class="names"><fit-text class="gen" w="134">Genesis 2000</fit-text><fit-text class="ge" w="90">Graphic Editor</fit-text></div>
          <div class="date"><span>30 Sep 2022</span><span class="t2">04:54 PM</span></div>
        </div>
      </div>
      <div class="mid">
        <div class="left">
          <div class="jobs mono9"><div class="jl">Job : 1adnp003a0</div><div class="jl">Step: set</div><div class="jm"><div class="jmb">Job Matrix ...</div></div></div>
          <div class="lay"><div class="stack"><div class="frame">
            ${layers.map((g) => html`<div class="grp">${g.map(([n, bg, sw]) => html`<div class="row">
              <div class="chk ${n === "outline" ? "on" : ""}"><i></i></div><div class="sw" style="background:${sw ?? "#000"}"></div>
              <div class="nm mono7" style="background:${bg}"><fit-text w=${n.length > 11 ? 81 : n.length * 7}>${n}</fit-text>${n === "outline" ? html`<i class="mk"></i>` : ""}</div></div>`)}</div>`)}
          </div></div></div>
          <div class="selb"><div class="sel mono7"><fit-text w="84">Selected : 0</fit-text></div></div>
        </div>
        <div class="canvas"><svg width="1601" height="897" viewBox="155 78 1601 897" shape-rendering="crispEdges">${board()}</svg></div>
        <div class="right">
          <div class="tb">${tools1.map((n) => html`<tool-button icon=${n} tone=${n.startsWith("lights") ? "red" : "teal"}></tool-button>`)}</div>
          <div class="tb two">${tools2.map(([n, t]) => html`<tool-button icon=${n} tone=${t}></tool-button>`)}</div>
          <div class="map"><svg width="160" height="444" viewBox="1758 486 160 444" shape-rendering="crispEdges">
            <rect x="1758" y="615" width="160" height="187" fill="#f00" /><path d="M1758,615.500H1918M1758.500,615V802M1758,801.500H1918" stroke="#a35a10" />
            <path d="M1770,638.500H1900" stroke="#48dfe2" stroke-width="2" /><path d="M1769,787V641L1771,639H1899" fill="none" stroke="#48dfe2" stroke-width="2" /><path d="M1900,639V786H1769" fill="none" stroke="#333" stroke-width="3" /><path d="M1900,640V786H1770" fill="none" stroke="#a9a9a9" stroke-width="2" />
            <path d="M1766,783L1772,789M1772,783L1766,789" stroke="#48dfe2" /></svg></div>
          <div class="xy mono9"><div>X = 222.851165mm</div><div>Y = 221.495818mm</div></div>
        </div>
      </div>
      <div class="cmd mono7">
        <div class="cb"><tool-button size="cmd" icon="diag"></tool-button></div><div class="cb"><tool-button size="cmd" icon="angle"></tool-button></div><div class="cb g"><tool-button size="cmd" icon="grid"></tool-button></div>
        <div class="dim"><fit-text w="35">Dim :</fit-text></div><div class="inp"><div><i></i></div></div><div class="ex"><tool-button size="cmd" icon="bang"></tool-button></div>
        <div class="msg"><fit-text w="357">${"<M1> - Select stretch distance ; <M1><M1> - Execute"}</fit-text></div>
        <div class="unit"><div class="ub"><fit-text w="18">MM</fit-text><i></i></div></div>
      </div>
      <div class="stat"><div class="mono7"><fit-text w="553">outline,#2375,Line,XS=219.37,YS=200.457,XE=219.37,YE=222.257,r101.6,POS,Ang=-90</fit-text></div></div>
      <div class="task">
        <svg class="orb" width="38" height="38" viewBox="0 0 38 38"><defs><radialGradient id="o" cx=".5" cy=".9" r=".9"><stop offset="0" stop-color="#5cd8f0" /><stop offset=".4" stop-color="#1d6fa8" /><stop offset="1" stop-color="#8fb2cc" /></radialGradient></defs>
          <circle cx="19" cy="19" r="17.500" fill="url(#o)" stroke="#0b2c55" />
          <path d="M9,11Q14,8 18,10L16,18Q12,16 7,18Z" fill="#ee6a35" /><path d="M19.500,11Q24,13 29,10L27,18Q22,20 18,18Z" fill="#8fc93a" /><path d="M7,20Q11,18 15.500,20L14,27Q10,25 5.500,27Z" fill="#4aa5e4" /><path d="M17,20.500Q22,22 26.500,20L25,27Q20,30 15.500,28Z" fill="#fbd23c" /></svg>
        ${apps.map(([p, cls, w, g]) => html`<div class="app ${cls}" style="width:${w}px"><svg width="33" height="33" viewBox="0 0 33 33">${p}</svg></div><span style="width:${g}px;flex:none"></span>`)}
        <div class="tray">
          <svg width="158" height="38" viewBox="1670 1041 158 38">
            <path d="M1673,1057H1687V1064H1673ZM1676,1056Q1677,1051 1681,1053T1686,1051" fill="#bbb" stroke="#ddd" /><path d="M1674,1059.500H1686M1674,1062H1686" stroke="#556" stroke-dasharray="1.500 1" />
            <circle cx="1701.500" cy="1058" r="7" fill="#1b2fc0" stroke="#c9cfe8" stroke-width="1.500" /><text x="1698" y="1062.500" font-size="12" font-weight="bold" fill="#fff" font-family="Liberation Sans">?</text>
            <path d="M1721.500,1050.500H1726.500V1053.500H1721.500ZM1719.500,1052.500V1055.500H1724" fill="none" stroke="#fff" /><path d="M1720,1062H1726L1723,1065ZM1738,1063H1745L1741.500,1059Z" fill="#fff" />
            <path d="M1759.500,1054V1068" stroke="#fff" stroke-width="1.500" /><path d="M1761,1055L1769,1056V1062L1761,1062Z" fill="#fff" /><circle cx="1769" cy="1064" r="4.500" fill="#d8231c" /><path d="M1767,1062L1771,1066M1771,1062L1767,1066" stroke="#fff" stroke-width="1.300" />
            <path d="M1783,1058H1785L1789,1054V1068L1785,1064H1783Z" fill="#fff" /><path d="M1791,1058Q1793,1061 1791,1064M1793.500,1056Q1797,1061 1793.500,1066" stroke="#fff" fill="none" />
            <path d="M1811.500,1056.500H1820.500V1064.500H1811.500ZM1813,1067.500H1819M1816,1065V1067M1807.500,1055V1058Q1809,1060 1810.500,1058V1055M1809,1060V1066H1811" stroke="#fff" fill="none" stroke-width="1.300" /></svg>
          <div class="clock"><fit-text w="31">17:00</fit-text><fit-text w="59">2022/9/30</fit-text></div>
          <div class="show"></div>
        </div>
      </div>
      <pop-view class="pv p2" label="Popview - 2">${this.view2()}</pop-view>
      <pop-view class="pv p1" active label="Popview - 1">${this.view1()}</pop-view>
    `;
  }
}
